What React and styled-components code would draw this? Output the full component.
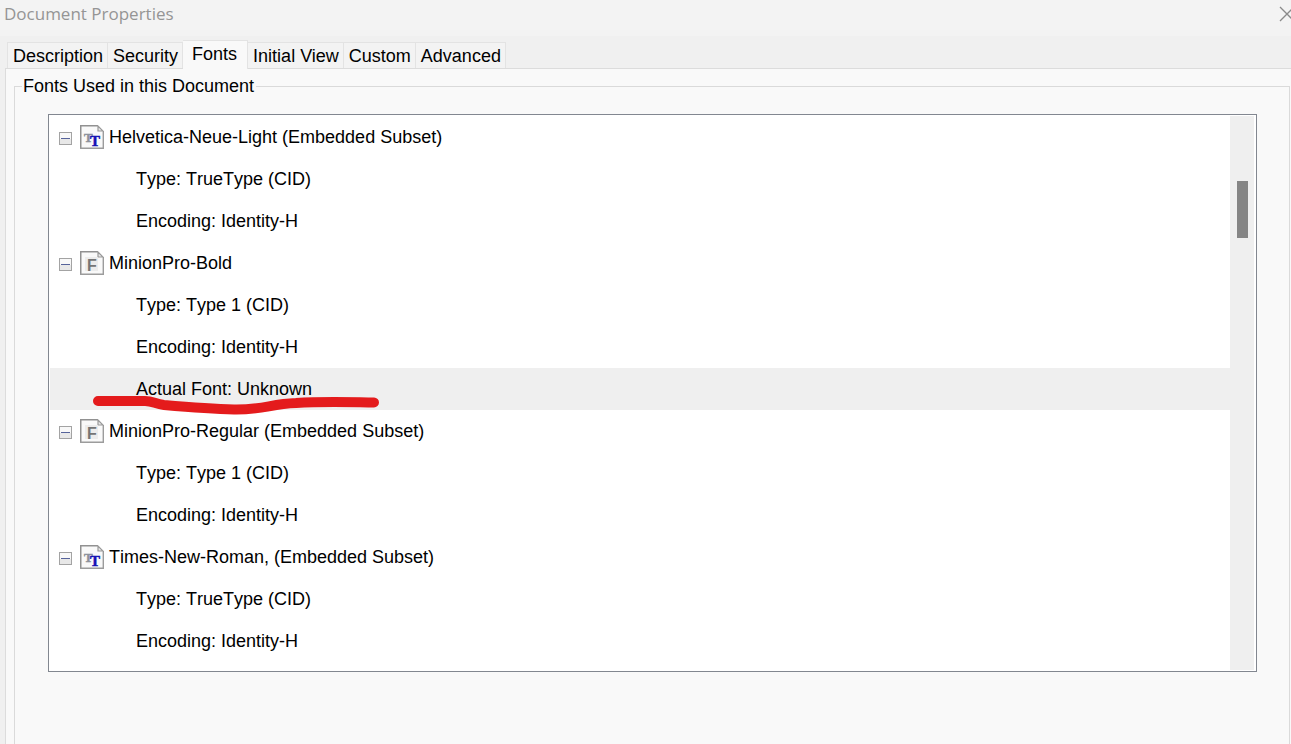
import React, { useState } from "react";
import styled, { createGlobalStyle, css } from "styled-components";

const GlobalStyle = createGlobalStyle`
  * { box-sizing: border-box; }
  body {
    margin: 0;
    background: #f0f0f0;
    color: #000;
    font-family: "Liberation Sans", Arial, sans-serif;
    font-size: 18px;
    line-height: 22px;
  }
  button { font: inherit; color: inherit; }
  ul { list-style: none; margin: 0; padding: 0; }
`;

const Dialog = styled.div`
  display: flex;
  flex-direction: column;
  height: 100vh;
  overflow: hidden;
`;

const TitleBar = styled.header`
  display: flex;
  flex: none;
  align-items: center;
  justify-content: space-between;
  height: 36px;
  padding: 0 0 8px 4px;
  background: #f3f3f3;
  overflow: hidden;
`;

const Title = styled.h1`
  margin: 0;
  font: 400 17px/24px "Open Sans", "Noto Sans", sans-serif;
  color: #959595;
`;

const CloseButton = styled.button`
  display: flex;
  flex: none;
  width: 12px;
  padding: 0;
  border: 0;
  background: none;
  overflow: hidden;
  svg { flex: none; }
`;

const TabList = styled.div`
  display: flex;
  flex: none;
  align-items: flex-end;
  height: 32px;
  padding-left: 7px;
`;

const Tab = styled.button`
  height: 26px;
  padding: 0 4px 0 5px;
  border: 1px solid #e3e3e3;
  border-width: 1px 1px 0 0;
  background: #f3f3f3;
  white-space: nowrap;
  line-height: 22px;

  &:first-child { border-left-width: 1px; }

  ${({ $active }) =>
    $active &&
    css`
      position: relative;
      z-index: 1;
      height: 29px;
      margin-bottom: -1px;
      padding: 0 10px 2px 9px;
      background: #f9f9f9;
    `}
`;

const TabPanel = styled.section`
  display: flex;
  flex: 1;
  min-height: 0;
  margin-left: 5px;
  padding: 6px 1px 0 8px;
  border: 1px solid #dcdcdc;
  border-width: 1px 0 0 1px;
  background: #f9f9f9;
`;

const Group = styled.fieldset`
  flex: 1;
  min-width: 0;
  margin: 0;
  padding: 17px 32px 0 33px;
  border: 1px solid #dadada;
  border-bottom: 0;
`;

const Legend = styled.legend`
  margin-left: -26px;
  padding: 0 2px 0 1px;
`;

const ListBox = styled.div`
  display: flex;
  padding: 1px;
  border: 1px solid #828790;
  background: #fff;
`;

const Tree = styled.ul`
  flex: 1;
  min-width: 0;
  font-kerning: none;

  && { padding-bottom: 8px; }
`;

const Row = styled.div`
  position: relative;
  display: flex;
  align-items: center;
  height: 42px;
  padding-left: ${({ $child }) => ($child ? 86 : 9)}px;
  background: ${({ $selected }) => ($selected ? "#efefef" : "transparent")};
  white-space: nowrap;
`;

const Toggle = styled.button`
  display: flex;
  margin: 2px 8px 0 0;
  padding: 0;
  border: 0;
  background: none;
`;

const IconBox = styled.span`
  display: flex;
  margin-right: 5px;
`;

const Marker = styled.svg`
  position: absolute;
  z-index: 1;
  left: 42px;
  top: 26px;
  pointer-events: none;
`;

const ScrollTrack = styled.div`
  flex: none;
  width: 24px;
  margin-right: 1px;
  padding: 65px 6px 0 7px;
  background: #efefef;
`;

const ScrollThumb = styled.div`
  height: 57px;
  background: #858585;
`;

const fonts = [
  {
    name: "Helvetica-Neue-Light (Embedded Subset)",
    kind: "truetype",
    details: ["Type: TrueType (CID)", "Encoding: Identity-H"],
  },
  {
    name: "MinionPro-Bold",
    kind: "type1",
    details: ["Type: Type 1 (CID)", "Encoding: Identity-H", "Actual Font: Unknown"],
  },
  {
    name: "MinionPro-Regular (Embedded Subset)",
    kind: "type1",
    details: ["Type: Type 1 (CID)", "Encoding: Identity-H"],
  },
  {
    name: "Times-New-Roman, (Embedded Subset)",
    kind: "truetype",
    details: ["Type: TrueType (CID)", "Encoding: Identity-H"],
  },
];

const tabs = ["Description", "Security", "Fonts", "Initial View", "Custom", "Advanced"];

function FontIcon({ kind }) {
  return (
    <IconBox aria-hidden="true">
      <svg width="24" height="24" viewBox="0 0 24 24">
        <path d="M1 1H18L23 6V23H1Z" fill="#f9f9f9" />
        <path d="M0.750 24V0.750H18" fill="none" stroke="#919191" strokeWidth="1.500" />
        <path d="M0 23.300H23.300V6" fill="none" stroke="#9c9c9c" strokeWidth="1.400" />
        <path d="M18 1V6H23Z" fill="#e9e9e9" stroke="#999" strokeWidth="1.200" />
        {kind === "truetype" ? (
          <text fontFamily="Liberation Serif, serif" fontWeight="700">
            <tspan x="4" y="17" fontSize="13" fill="#8d919b" stroke="#8d919b" strokeWidth="0.500">T</tspan>
            <tspan x="10" y="21" fontSize="15" fill="#1414b4" stroke="#1414b4" strokeWidth="0.500">T</tspan>
          </text>
        ) : (
          <>
            <rect x="5" y="6" width="13" height="14" fill="#ececec" />
            <text x="7" y="20" fontFamily="Liberation Sans, sans-serif" fontWeight="700" fontSize="16" fill="#757575">F</text>
          </>
        )}
      </svg>
    </IconBox>
  );
}

function ToggleIcon({ open }) {
  return (
    <svg width="13" height="13" viewBox="0 0 13 13" aria-hidden="true">
      <rect x="0.500" y="0.500" width="12" height="12" fill="#f8f8f8" stroke="#a3a3a3" />
      <rect x="1" y="7" width="11" height="5" fill="#e8e8e8" />
      <path d="M2 6.500H11" stroke="#56639a" />
      {!open && <path d="M6.500 2V11" stroke="#56639a" />}
    </svg>
  );
}

function FontNode({ font }) {
  const [open, setOpen] = useState(true);
  return (
    <li>
      <Row>
        <Toggle
          type="button"
          aria-expanded={open}
          aria-label={font.name}
          onClick={() => setOpen(!open)}
        >
          <ToggleIcon open={open} />
        </Toggle>
        <FontIcon kind={font.kind} />
        <span>{font.name}</span>
      </Row>
      {open && (
        <ul>
          {font.details.map((detail) => {
            const selected = detail.startsWith("Actual Font");
            return (
              <li key={detail}>
                <Row $child $selected={selected}>
                  {detail}
                  {selected && (
                    <Marker width="288" height="22" viewBox="0 0 288 22" aria-hidden="true">
                      <path
                        d="M6 7H53C61 7 63 10 72 11C95 13 120 15 142 15.500C171 16 178 10 204 9C232 7 254 8 282 8.500"
                        fill="none"
                        stroke="#e41b1c"
                        strokeWidth="10"
                        strokeLinecap="round"
                        strokeLinejoin="round"
                      />
                    </Marker>
                  )}
                </Row>
              </li>
            );
          })}
        </ul>
      )}
    </li>
  );
}

export default function App() {
  return (
    <>
      <GlobalStyle />
      <Dialog>
        <TitleBar>
          <Title>Document Properties</Title>
          <CloseButton type="button" aria-label="Close">
            <svg width="18" height="18" viewBox="0 0 18 18" aria-hidden="true">
              <path d="M1 2L15 16M15 2L1 16" stroke="#8a8a8a" strokeWidth="1.300" />
            </svg>
          </CloseButton>
        </TitleBar>
        <TabList role="tablist">
          {tabs.map((tab) => (
            <Tab key={tab} type="button" role="tab" aria-selected={tab === "Fonts"} $active={tab === "Fonts"}>
              {tab}
            </Tab>
          ))}
        </TabList>
        <TabPanel role="tabpanel">
          <Group>
            <Legend>Fonts Used in this Document</Legend>
            <ListBox>
              <Tree>
                {fonts.map((font) => (
                  <FontNode key={font.name} font={font} />
                ))}
              </Tree>
              <ScrollTrack>
                <ScrollThumb />
              </ScrollTrack>
            </ListBox>
          </Group>
        </TabPanel>
      </Dialog>
    </>
  );
}
